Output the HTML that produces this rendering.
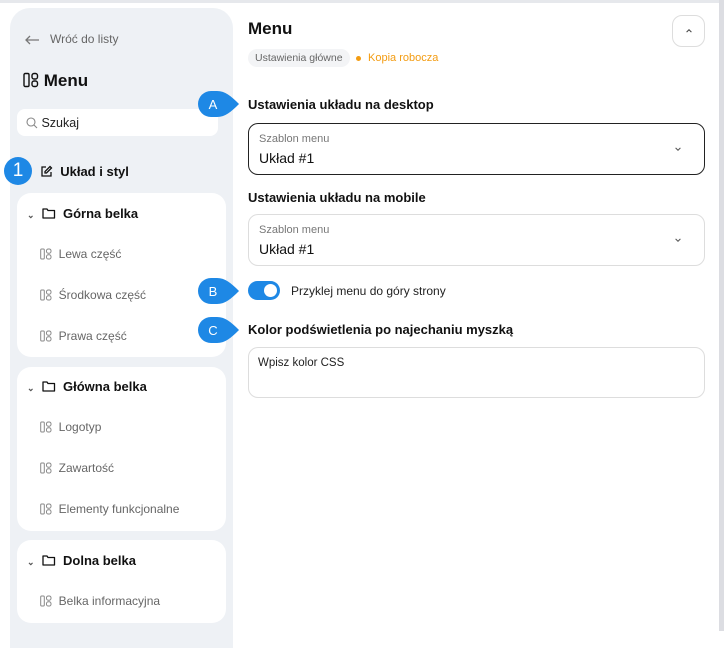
<!DOCTYPE html>
<html><head><meta charset="utf-8"><style>
*{box-sizing:border-box;margin:0;padding:0}
body{width:724px;height:631px;overflow:hidden;background:#fff;font-family:"Liberation Sans",sans-serif;position:relative;color:#111}
.topline{position:absolute;left:0;top:0;width:724px;height:3px;background:#e6e8ec}
.rightline{position:absolute;left:719px;top:0;width:5px;height:631px;background:#dcdde2}
.side{position:absolute;left:10px;top:8px;width:223px;height:640px;background:#eef1f5;border-radius:20px 20px 0 0}
.a{position:absolute;white-space:nowrap}
.card{position:absolute;left:17px;width:209px;background:#fff;border-radius:14px}
.it{position:absolute;left:40px;font-size:12px;color:#666}
.ic{display:inline-block;vertical-align:middle}
.hd{position:absolute;left:27px;font-size:13px;font-weight:bold;color:#111}
.call{position:absolute;width:44px;height:26px}
.box{position:absolute;left:248px;width:457px;border-radius:10px;background:#fff}
</style></head><body>
<div class="topline"></div>
<div class="side"></div>
<div class="a" style="left:24px;top:32px;font-size:12px;color:#666">
<svg class="ic" width="16" height="10" viewBox="0 0 16 10"><path d="M15 5H2M6 1L2 5l4 4" stroke="#777" stroke-width="1.3" fill="none"/></svg>&nbsp;&nbsp;&nbsp;Wróć do listy</div>
<div class="a" style="left:23px;top:71px;font-size:17px;font-weight:bold">
<svg class="ic" width="16" height="16" viewBox="0 0 16 16" style="margin-top:-3px"><rect x="1" y="1.5" width="5" height="13" rx="1.3" stroke="#111" stroke-width="1.4" fill="none"/><rect x="9" y="1.5" width="5.5" height="5.5" rx="2" stroke="#111" stroke-width="1.4" fill="none"/><rect x="9" y="9" width="5.5" height="5.5" rx="2" stroke="#111" stroke-width="1.4" fill="none"/></svg>&nbsp;Menu</div>
<div class="a" style="left:17px;top:109px;width:201px;height:27px;background:#fff;border-radius:8px"></div>
<div class="a" style="left:26px;top:116px;font-size:12.5px;color:#222"><svg class="ic" width="12" height="12" viewBox="0 0 12 12" style="margin-top:-2px"><circle cx="5" cy="5" r="4" stroke="#888" stroke-width="1.1" fill="none"/><path d="M8 8l3 3" stroke="#888" stroke-width="1.1"/></svg>&nbsp;Szukaj</div>
<div class="a" style="left:4px;top:157px;width:28px;height:28px;border-radius:50%;background:#1e88e5;color:#fff;font-size:19px;text-align:center;line-height:28px">1</div>
<div class="a" style="left:40px;top:164px;font-size:13px;font-weight:bold"><svg class="ic" width="13" height="13" viewBox="0 0 13 13" style="margin-top:-3px"><path d="M6 2H2v9h9V7" stroke="#111" stroke-width="1.3" fill="none"/><path d="M10 1.5l1.5 1.5-5 5H5V6.5z" stroke="#111" stroke-width="1.3" fill="none"/></svg>&nbsp;&nbsp;Układ i styl</div>

<div class="card" style="top:193px;height:164px"></div>
<div class="card" style="top:367px;height:164px"></div>
<div class="card" style="top:540px;height:83px"></div>

<div class="hd" style="top:206px"><span style="font-size:9px;color:#555">⌄</span>&nbsp;&nbsp;<svg class="ic" width="14" height="12" viewBox="0 0 14 12" style="margin-top:-3px"><path d="M1 2h4l1 1.5h6.5V11H1z" stroke="#111" stroke-width="1.3" fill="none" stroke-linejoin="round"/></svg>&nbsp;&nbsp;Górna belka</div>
<div class="hd" style="top:379px"><span style="font-size:9px;color:#555">⌄</span>&nbsp;&nbsp;<svg class="ic" width="14" height="12" viewBox="0 0 14 12" style="margin-top:-3px"><path d="M1 2h4l1 1.5h6.5V11H1z" stroke="#111" stroke-width="1.3" fill="none" stroke-linejoin="round"/></svg>&nbsp;&nbsp;Główna belka</div>
<div class="hd" style="top:553px"><span style="font-size:9px;color:#555">⌄</span>&nbsp;&nbsp;<svg class="ic" width="14" height="12" viewBox="0 0 14 12" style="margin-top:-3px"><path d="M1 2h4l1 1.5h6.5V11H1z" stroke="#111" stroke-width="1.3" fill="none" stroke-linejoin="round"/></svg>&nbsp;&nbsp;Dolna belka</div>

<div class="it" style="top:247px"><svg class="ic" width="12" height="12" viewBox="0 0 12 12" style="margin-top:-2px"><rect x="0.7" y="1" width="3.6" height="10" rx="1" stroke="#888" fill="none"/><rect x="6.5" y="1" width="4.5" height="4.2" rx="1.8" stroke="#888" fill="none"/><rect x="6.5" y="6.8" width="4.5" height="4.2" rx="1.8" stroke="#888" fill="none"/></svg>&nbsp;&nbsp;Lewa część</div>
<div class="it" style="top:288px"><svg class="ic" width="12" height="12" viewBox="0 0 12 12" style="margin-top:-2px"><rect x="0.7" y="1" width="3.6" height="10" rx="1" stroke="#888" fill="none"/><rect x="6.5" y="1" width="4.5" height="4.2" rx="1.8" stroke="#888" fill="none"/><rect x="6.5" y="6.8" width="4.5" height="4.2" rx="1.8" stroke="#888" fill="none"/></svg>&nbsp;&nbsp;Środkowa część</div>
<div class="it" style="top:329px"><svg class="ic" width="12" height="12" viewBox="0 0 12 12" style="margin-top:-2px"><rect x="0.7" y="1" width="3.6" height="10" rx="1" stroke="#888" fill="none"/><rect x="6.5" y="1" width="4.5" height="4.2" rx="1.8" stroke="#888" fill="none"/><rect x="6.5" y="6.8" width="4.5" height="4.2" rx="1.8" stroke="#888" fill="none"/></svg>&nbsp;&nbsp;Prawa część</div>
<div class="it" style="top:420px"><svg class="ic" width="12" height="12" viewBox="0 0 12 12" style="margin-top:-2px"><rect x="0.7" y="1" width="3.6" height="10" rx="1" stroke="#888" fill="none"/><rect x="6.5" y="1" width="4.5" height="4.2" rx="1.8" stroke="#888" fill="none"/><rect x="6.5" y="6.8" width="4.5" height="4.2" rx="1.8" stroke="#888" fill="none"/></svg>&nbsp;&nbsp;Logotyp</div>
<div class="it" style="top:461px"><svg class="ic" width="12" height="12" viewBox="0 0 12 12" style="margin-top:-2px"><rect x="0.7" y="1" width="3.6" height="10" rx="1" stroke="#888" fill="none"/><rect x="6.5" y="1" width="4.5" height="4.2" rx="1.8" stroke="#888" fill="none"/><rect x="6.5" y="6.8" width="4.5" height="4.2" rx="1.8" stroke="#888" fill="none"/></svg>&nbsp;&nbsp;Zawartość</div>
<div class="it" style="top:502px"><svg class="ic" width="12" height="12" viewBox="0 0 12 12" style="margin-top:-2px"><rect x="0.7" y="1" width="3.6" height="10" rx="1" stroke="#888" fill="none"/><rect x="6.5" y="1" width="4.5" height="4.2" rx="1.8" stroke="#888" fill="none"/><rect x="6.5" y="6.8" width="4.5" height="4.2" rx="1.8" stroke="#888" fill="none"/></svg>&nbsp;&nbsp;Elementy funkcjonalne</div>
<div class="it" style="top:594px"><svg class="ic" width="12" height="12" viewBox="0 0 12 12" style="margin-top:-2px"><rect x="0.7" y="1" width="3.6" height="10" rx="1" stroke="#888" fill="none"/><rect x="6.5" y="1" width="4.5" height="4.2" rx="1.8" stroke="#888" fill="none"/><rect x="6.5" y="6.8" width="4.5" height="4.2" rx="1.8" stroke="#888" fill="none"/></svg>&nbsp;&nbsp;Belka informacyjna</div>

<!-- main -->
<div class="a" style="left:248px;top:19px;font-size:17px;font-weight:bold">Menu</div>
<div class="a" style="left:672px;top:15px;width:33px;height:32px;border:1px solid #ddd;border-radius:10px;text-align:center;line-height:30px;font-size:10px;color:#444">
<svg width="8" height="5" viewBox="0 0 10 6"><path d="M2 5l3-3 3 3" stroke="#444" stroke-width="1.3" fill="none"/></svg></div>
<div class="a" style="left:248px;top:49px;height:18px;padding:0 7px;background:#f3f4f6;border-radius:9px;font-size:10.5px;line-height:18px;color:#666">Ustawienia główne</div>
<div class="a" style="left:356px;top:56px;width:5px;height:5px;border-radius:50%;background:#f39c12"></div>
<div class="a" style="left:368px;top:52px;font-size:11px;color:#f39c12">Kopia robocza</div>

<svg class="call" style="left:198px;top:91px" viewBox="0 0 44 26"><path d="M13 0h6c8 0 14 5 22 13C33 21 27 26 19 26h-6A13 13 0 0 1 13 0z" fill="#1e88e5"/><text x="15" y="18" font-size="13" fill="#fff" text-anchor="middle" font-family="Liberation Sans">A</text></svg>
<svg class="call" style="left:198px;top:278px" viewBox="0 0 44 26"><path d="M13 0h6c8 0 14 5 22 13C33 21 27 26 19 26h-6A13 13 0 0 1 13 0z" fill="#1e88e5"/><text x="15" y="18" font-size="13" fill="#fff" text-anchor="middle" font-family="Liberation Sans">B</text></svg>
<svg class="call" style="left:198px;top:317px" viewBox="0 0 44 26"><path d="M13 0h6c8 0 14 5 22 13C33 21 27 26 19 26h-6A13 13 0 0 1 13 0z" fill="#1e88e5"/><text x="15" y="18" font-size="13" fill="#fff" text-anchor="middle" font-family="Liberation Sans">C</text></svg>

<div class="a" style="left:248px;top:97px;font-size:13px;font-weight:bold;color:#111">Ustawienia układu na desktop</div>
<div class="box" style="top:123px;height:52px;border:1.3px solid #222"></div>
<div class="a" style="left:259px;top:133px;font-size:11px;color:#777">Szablon menu</div>
<div class="a" style="left:259px;top:150px;font-size:14px;color:#111">Układ #1</div>
<svg class="a" style="left:674px;top:147px" width="8" height="5" viewBox="0 0 10 6"><path d="M2 1l3 3 3-3" stroke="#555" stroke-width="1.3" fill="none"/></svg>

<div class="a" style="left:248px;top:190px;font-size:13px;font-weight:bold;color:#111">Ustawienia układu na mobile</div>
<div class="box" style="top:214px;height:52px;border:1px solid #ddd"></div>
<div class="a" style="left:259px;top:224px;font-size:11px;color:#777">Szablon menu</div>
<div class="a" style="left:259px;top:241px;font-size:14px;color:#111">Układ #1</div>
<svg class="a" style="left:674px;top:238px" width="8" height="5" viewBox="0 0 10 6"><path d="M2 1l3 3 3-3" stroke="#555" stroke-width="1.3" fill="none"/></svg>

<div class="a" style="left:248px;top:281px;width:32px;height:19px;border-radius:10px;background:#1e88e5"></div>
<div class="a" style="left:264px;top:284px;width:13px;height:13px;border-radius:50%;background:#fff"></div>
<div class="a" style="left:291px;top:284px;font-size:12px;color:#222">Przyklej menu do góry strony</div>

<div class="a" style="left:248px;top:322px;font-size:13px;font-weight:bold;color:#111">Kolor podświetlenia po najechaniu myszką</div>
<div class="box" style="top:347px;height:51px;border:1px solid #ddd"></div>
<div class="a" style="left:258px;top:357px;font-size:11.5px;color:#222">Wpisz kolor CSS</div>
<div class="rightline"></div>
</body></html>
